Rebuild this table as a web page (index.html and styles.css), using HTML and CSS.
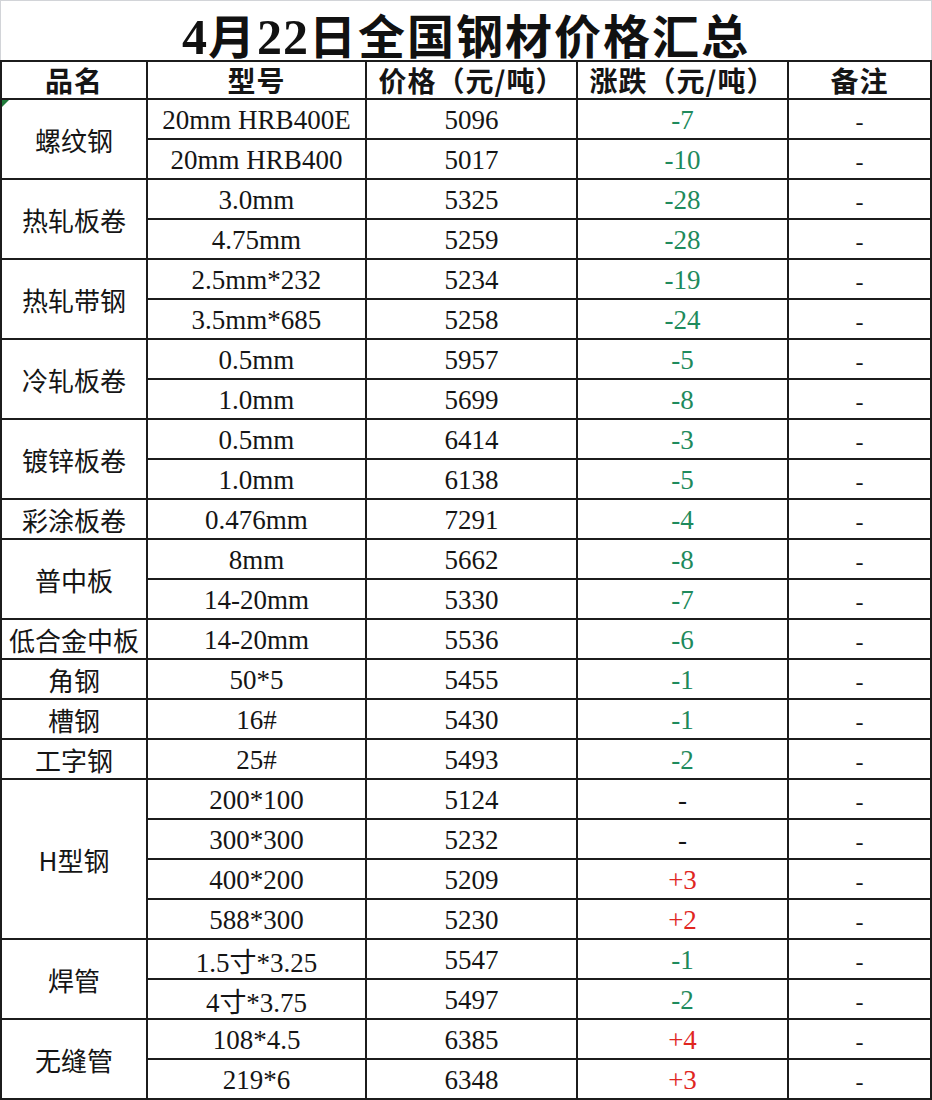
FILE: index.html
```html
<!DOCTYPE html>
<html lang="zh-CN">
<head>
<meta charset="utf-8">
<title>4月22日全国钢材价格汇总</title>
<link rel="stylesheet" href="styles.css">
</head>
<body>
<div class="sheet">
  <div class="title"><span class="digits">4</span>月<span class="digits">22</span>日全国钢材价格汇总</div>
  <div class="grid">
    <div class="cell head">品名</div>
    <div class="cell head">型号</div>
    <div class="cell head">价格（元/吨）</div>
    <div class="cell head">涨跌（元/吨）</div>
    <div class="cell head">备注</div>

    <div class="cell name span2 flagged">螺纹钢</div>
    <div class="cell spec">20mm HRB400E</div><div class="cell num">5096</div><div class="cell num down">-7</div><div class="cell num dash">-</div>
    <div class="cell spec">20mm HRB400</div><div class="cell num">5017</div><div class="cell num down">-10</div><div class="cell num dash">-</div>

    <div class="cell name span2">热轧板卷</div>
    <div class="cell spec">3.0mm</div><div class="cell num">5325</div><div class="cell num down">-28</div><div class="cell num dash">-</div>
    <div class="cell spec">4.75mm</div><div class="cell num">5259</div><div class="cell num down">-28</div><div class="cell num dash">-</div>

    <div class="cell name span2">热轧带钢</div>
    <div class="cell spec">2.5mm*232</div><div class="cell num">5234</div><div class="cell num down">-19</div><div class="cell num dash">-</div>
    <div class="cell spec">3.5mm*685</div><div class="cell num">5258</div><div class="cell num down">-24</div><div class="cell num dash">-</div>

    <div class="cell name span2">冷轧板卷</div>
    <div class="cell spec">0.5mm</div><div class="cell num">5957</div><div class="cell num down">-5</div><div class="cell num dash">-</div>
    <div class="cell spec">1.0mm</div><div class="cell num">5699</div><div class="cell num down">-8</div><div class="cell num dash">-</div>

    <div class="cell name span2">镀锌板卷</div>
    <div class="cell spec">0.5mm</div><div class="cell num">6414</div><div class="cell num down">-3</div><div class="cell num dash">-</div>
    <div class="cell spec">1.0mm</div><div class="cell num">6138</div><div class="cell num down">-5</div><div class="cell num dash">-</div>

    <div class="cell name">彩涂板卷</div>
    <div class="cell spec">0.476mm</div><div class="cell num">7291</div><div class="cell num down">-4</div><div class="cell num dash">-</div>

    <div class="cell name span2">普中板</div>
    <div class="cell spec">8mm</div><div class="cell num">5662</div><div class="cell num down">-8</div><div class="cell num dash">-</div>
    <div class="cell spec">14-20mm</div><div class="cell num">5330</div><div class="cell num down">-7</div><div class="cell num dash">-</div>

    <div class="cell name">低合金中板</div>
    <div class="cell spec">14-20mm</div><div class="cell num">5536</div><div class="cell num down">-6</div><div class="cell num dash">-</div>

    <div class="cell name">角钢</div>
    <div class="cell spec">50*5</div><div class="cell num">5455</div><div class="cell num down">-1</div><div class="cell num dash">-</div>

    <div class="cell name">槽钢</div>
    <div class="cell spec">16#</div><div class="cell num">5430</div><div class="cell num down">-1</div><div class="cell num dash">-</div>

    <div class="cell name">工字钢</div>
    <div class="cell spec">25#</div><div class="cell num">5493</div><div class="cell num down">-2</div><div class="cell num dash">-</div>

    <div class="cell name span4">H型钢</div>
    <div class="cell spec">200*100</div><div class="cell num">5124</div><div class="cell num">-</div><div class="cell num dash">-</div>
    <div class="cell spec">300*300</div><div class="cell num">5232</div><div class="cell num">-</div><div class="cell num dash">-</div>
    <div class="cell spec">400*200</div><div class="cell num">5209</div><div class="cell num up">+3</div><div class="cell num dash">-</div>
    <div class="cell spec">588*300</div><div class="cell num">5230</div><div class="cell num up">+2</div><div class="cell num dash">-</div>

    <div class="cell name span2">焊管</div>
    <div class="cell spec">1.5寸*3.25</div><div class="cell num">5547</div><div class="cell num down">-1</div><div class="cell num dash">-</div>
    <div class="cell spec">4寸*3.75</div><div class="cell num">5497</div><div class="cell num down">-2</div><div class="cell num dash">-</div>

    <div class="cell name span2">无缝管</div>
    <div class="cell spec">108*4.5</div><div class="cell num">6385</div><div class="cell num up">+4</div><div class="cell num dash">-</div>
    <div class="cell spec">219*6</div><div class="cell num">6348</div><div class="cell num up">+3</div><div class="cell num dash">-</div>
  </div>
</div>
</body>
</html>
```

FILE: styles.css
```css
html, body {
  margin: 0;
  padding: 0;
  background: #ffffff;
}

.sheet {
  width: 932px;
  height: 1100px;
  overflow: hidden;
  background: #ffffff;
}

.title {
  box-sizing: border-box;
  height: 60px;
  border: 1px solid #d2d4d8;
  border-bottom: none;
  padding-top: 6px;
  line-height: 54px;
  text-align: center;
  font-family: "Noto Sans CJK SC", sans-serif;
  font-weight: 700;
  font-size: 47px;
  letter-spacing: 2px;
  color: #111111;
}

.digits {
  font-family: "Liberation Serif", serif;
  font-weight: 700;
  font-size: 50px;
  letter-spacing: 1px;
}

.grid {
  display: grid;
  grid-template-columns: 144px 217px 209px 209px 141px;
  grid-template-rows: 36px;
  grid-auto-rows: 38px;
  gap: 2px;
  padding: 2px;
  background: #1c1c1c;
}

.cell {
  position: relative;
  background: #ffffff;
  display: flex;
  align-items: center;
  justify-content: center;
  color: #151515;
  white-space: nowrap;
  padding-top: 3px;
  box-sizing: border-box;
}

.head {
  font-family: "Noto Sans CJK SC", sans-serif;
  font-weight: 700;
  font-size: 28px;
  letter-spacing: 1px;
  padding-top: 0;
}

.name {
  font-family: "Noto Sans CJK SC", sans-serif;
  font-size: 26px;
  padding-top: 0;
}

.span2 {
  grid-row: span 2;
}

.span4 {
  grid-row: span 4;
}

.spec,
.num {
  font-family: "Liberation Serif", "Noto Sans CJK SC", serif;
  font-size: 27px;
}

.dash {
  padding-top: 6px;
  font-size: 24px;
}

.down {
  color: #1e8a5c;
}

.up {
  color: #e0261f;
}

.flagged::before {
  content: "";
  position: absolute;
  left: 0;
  top: 0;
  width: 0;
  height: 0;
  border-top: 7px solid #1f7a3a;
  border-right: 7px solid transparent;
}
```
